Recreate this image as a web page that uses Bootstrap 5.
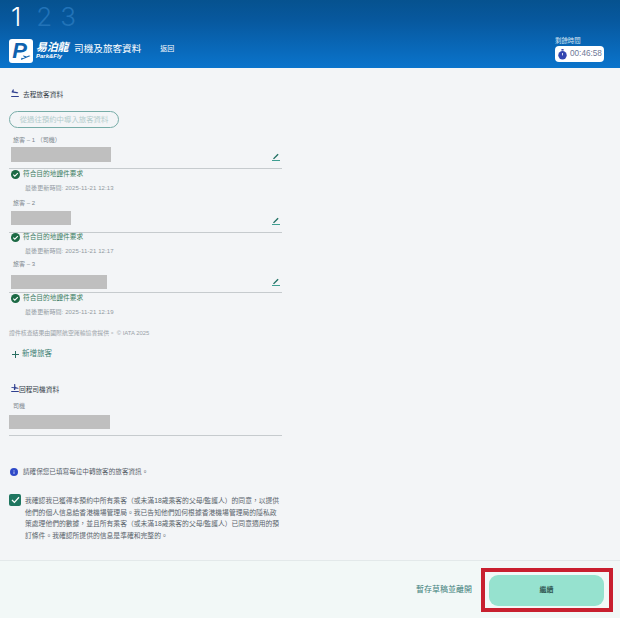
<!DOCTYPE html>
<html lang="zh-Hant">
<head>
<meta charset="utf-8">
<link href="https://cdn.jsdelivr.net/npm/bootstrap@5.3.0/dist/css/bootstrap.min.css" rel="stylesheet">
<style>
html,body{height:618px;overflow:hidden}
body{background:#f3f5f7;font-family:"Liberation Sans","Noto Sans CJK TC",sans-serif;color:#4a5560;position:relative}
.hdr{height:68px;background:linear-gradient(180deg,#06528f 0%,#07589e 30%,#0a74cc 100%);color:#fff;padding:0 16px 0 9px}
.steps{height:34px;font-family:Inter,sans-serif;font-weight:300;font-size:26px;line-height:33px;gap:8px;padding-left:2px}
.steps span{color:#2273b8}
.steps .on{color:#fff;margin-right:7px}
.logo-box{width:24px;height:24px;background:#fff;border-radius:3px;position:relative}
.logo-p{font:italic 700 22px/23px "Liberation Sans",sans-serif;color:#0f62ae;display:block;text-align:center;margin-left:-3px}
.logo-plane{position:absolute;right:2px;bottom:2px}
.logo-txt{margin-left:3px;font-style:italic;font-weight:700;line-height:1}
.logo-cn{font-size:11px;letter-spacing:-.3px;display:block;line-height:11px}
.logo-en{font:italic 700 6px/7px "Liberation Sans",sans-serif;display:block}
.ttl{font-size:9.6px;margin-left:6px;margin-top:-4px}
.back{font-size:7px;margin-left:19px;margin-top:-3px}
.tm-l{font-size:6.4px;line-height:9px;color:#dbe8f5;margin-left:0;margin-top:-1px}
.tm-b{width:49px;height:16px;background:#fff;border-radius:4px;font:8.2px/16px "Liberation Sans",sans-serif;color:#6d7897;gap:3px;padding-left:3px;margin-top:1px}
.main{padding:21px 0 0 9px;width:282px;height:492px}
.sec{font-size:6.7px;color:#333d47;line-height:12px;height:12px}
.imp{width:110px;height:17px;border:1px solid #77aca7;border-radius:9px;font-size:7.4px;line-height:15px;color:#b4cdcd;margin:10px 0 0;text-align:center;background:transparent;padding:0}
.lbl{font-size:6px;line-height:9px;color:#7b858d;padding-left:4px}
.fld{border-bottom:1px solid #c6cbce;padding-left:2px}
.blk{background:#bfbfbf;height:14px}
.edit{margin-right:2px}
.ok{font-size:6.7px;line-height:10px;color:#3c7d62;padding-left:2px;gap:3px}
.upd{font-size:6px;line-height:9px;color:#929aa1;padding-left:16px;margin-top:5px;letter-spacing:.1px}
.cond{font-size:5.9px;line-height:8px;color:#9aa2a8;margin-top:12px}
.add{font-size:7.5px;line-height:12px;color:#3b8073;margin-top:11px;padding-left:3px;gap:3px}
.tip{font-size:6.6px;line-height:10px;color:#57616a;gap:5px;padding-left:1px}
.agree{font-size:6.8px;line-height:11.7px;color:#59636b;width:257px}
.cbx{width:12px;height:12px;background:#1f7660;border-radius:2px;flex:none;margin-right:4px;margin-top:-1px}
.foot{height:58px;background:#f2f8f7;border-top:1px solid #e3e9ea;padding-right:16px}
.save{font-size:8px;color:#3f7f7b;margin-right:17px}
.go{width:115px;height:31px;background:#96e2cf;border:0;border-radius:9px;font-size:7px;font-weight:500;color:#21433e;padding:0;margin-top:1px}
.mark-red{position:absolute;left:481px;top:568px;width:132px;height:44px;border:4px solid #c8202f;pointer-events:none}
</style>
</head>
<body>
<header class="hdr">
  <div class="steps d-flex"><span class="on">1</span><span>2</span><span>3</span></div>
  <div class="d-flex align-items-start justify-content-between" style="padding-top:5px">
    <div class="d-flex align-items-center">
      <div class="logo-box"><b class="logo-p">P</b>
        <svg class="logo-plane" width="10" height="6" viewBox="0 0 10 6"><path d="M0 5 L9.5 1 L8 .5 L5.6 1.5 L2.5 .6 L1.8 1 L4 2.3 L2 3.2 L.9 2.8 L.4 3.1 Z" fill="#0f62ae"/></svg>
      </div>
      <div class="logo-txt"><span class="logo-cn">易泊龍</span><span class="logo-en">Park&amp;Fly</span></div>
      <div class="ttl">司機及旅客資料</div>
      <div class="back">返回</div>
    </div>
    <div style="margin-top:-2px">
      <div class="tm-l">剩餘時間</div>
      <div class="tm-b d-flex align-items-center">
        <svg width="9" height="11" viewBox="0 0 9 11"><rect x="3.4" y="0" width="2.2" height="1.6" fill="#3949ab"/><circle cx="4.5" cy="6.3" r="4.2" fill="#3346b0"/><path d="M4.5 4v2.4" stroke="#fff" stroke-width=".8"/></svg>
        <span>00:46:58</span>
      </div>
    </div>
  </div>
</header>
<main class="main">
  <div class="sec d-flex align-items-center gap-1" style="padding-left:2px">
    <svg width="8" height="8" viewBox="0 0 8 8" style="margin-top:-4px"><path d="M.2 7h7.6v1H.2zM.5 3 2 .2l.8.2-.2 2 3.4.7c.9.2 1.4.7 1.2 1-.2.3-.9.3-1.5.2L.8 3.4z" fill="#2f3f8f"/></svg>
    <span>去程旅客資料</span>
  </div>
  <button class="imp d-block" type="button">從過往預約中導入旅客資料</button>

  <div class="lbl" style="margin-top:8px">旅客 – 1 （司機）</div>
  <div class="fld d-flex justify-content-between align-items-end" style="padding-top:2px;height:24px;padding-bottom:7px">
    <div class="blk" style="width:100px;height:15px;align-self:flex-start"></div>
    <svg class="edit" width="8" height="8" viewBox="0 0 8 8"><path d="M0 7h8v1H0z" fill="#3f9f92"/><path d="M1 5.5 5.6 .8l1 1L2 6.2z" fill="#1f6f62"/></svg>
  </div>
  <div class="ok d-flex align-items-center"><svg width="9" height="9" viewBox="0 0 9 9"><circle cx="4.5" cy="4.5" r="4.5" fill="#1c6a45"/><path d="M2.3 4.6l1.5 1.5 3-3" fill="none" stroke="#fff" stroke-width="1.1"/></svg><span>符合目的地證件要求</span></div>
  <div class="upd">最後更新時間: 2025-11-21 12:13</div>

  <div class="lbl" style="margin-top:6px">旅客 – 2</div>
  <div class="fld d-flex justify-content-between align-items-end" style="padding-top:3px;height:25px;padding-bottom:7px">
    <div class="blk" style="width:60px;align-self:flex-start"></div>
    <svg class="edit" width="8" height="8" viewBox="0 0 8 8"><path d="M0 7h8v1H0z" fill="#3f9f92"/><path d="M1 5.5 5.6 .8l1 1L2 6.2z" fill="#1f6f62"/></svg>
  </div>
  <div class="ok d-flex align-items-center" style="margin-top:-1px"><svg width="9" height="9" viewBox="0 0 9 9"><circle cx="4.5" cy="4.5" r="4.5" fill="#1c6a45"/><path d="M2.3 4.6l1.5 1.5 3-3" fill="none" stroke="#fff" stroke-width="1.1"/></svg><span>符合目的地證件要求</span></div>
  <div class="upd">最後更新時間: 2025-11-21 12:17</div>

  <div class="lbl" style="margin-top:4px">旅客 – 3</div>
  <div class="fld d-flex justify-content-between align-items-end" style="padding-top:6px;height:24px;padding-bottom:6px">
    <div class="blk" style="width:96px;align-self:flex-start"></div>
    <svg class="edit" width="8" height="8" viewBox="0 0 8 8"><path d="M0 7h8v1H0z" fill="#3f9f92"/><path d="M1 5.5 5.6 .8l1 1L2 6.2z" fill="#1f6f62"/></svg>
  </div>
  <div class="ok d-flex align-items-center"><svg width="9" height="9" viewBox="0 0 9 9"><circle cx="4.5" cy="4.5" r="4.5" fill="#1c6a45"/><path d="M2.3 4.6l1.5 1.5 3-3" fill="none" stroke="#fff" stroke-width="1.1"/></svg><span>符合目的地證件要求</span></div>
  <div class="upd">最後更新時間: 2025-11-21 12:19</div>

  <div class="cond">證件核查結果由國際航空運輸協會提供。 © IATA 2025</div>
  <div class="add d-flex align-items-center"><svg width="7" height="7" viewBox="0 0 7 7"><path d="M3 0h1v3h3v1H4v3H3V4H0V3h3z" fill="#2a6f62"/></svg><span>新增旅客</span></div>

  <div class="sec d-flex align-items-center" style="margin-top:24px;padding-left:2px">
    <svg width="8" height="8" viewBox="0 0 8 8" style="margin-top:-5px"><path d="M.2 7h7.6v1H.2zM3.2 0h1l.2 3 3 .9v.9L4.4 4.4 4.2 6h-1.3l.1-1.7-2.6-.6V3l2.7.2z" fill="#2f3f8f"/></svg>
    <span>回程司機資料</span>
  </div>
  <div class="lbl" style="margin-top:6px;padding-left:4px">司機</div>
  <div class="fld" style="padding:4px 0 6px"><div class="blk" style="width:101px"></div></div>

  <div class="tip d-flex align-items-center" style="margin-top:31px">
    <svg width="8" height="8" viewBox="0 0 8 8"><circle cx="4" cy="4" r="4" fill="#2e49c8"/><path d="M4 3.4V6M4 2v.7" stroke="#dfe4fb" stroke-width=".8"/></svg>
    <span>請確保您已填寫每位中轉旅客的旅客資訊。</span>
  </div>
  <div class="d-flex" style="margin-top:18px">
    <div class="cbx d-flex align-items-center justify-content-center"><svg width="9" height="8" viewBox="0 0 9 8"><path d="M1 4l2.4 2.4L8 1.2" fill="none" stroke="#fff" stroke-width="1.3"/></svg></div>
    <div class="agree">我確認我已獲得本預約中所有乘客（或未滿18歲乘客的父母/監護人）的同意，以提供他們的個人信息給香港機場管理局。我已告知他們如何根據香港機場管理局的隱私政策處理他們的數據，並且所有乘客（或未滿18歲乘客的父母/監護人）已同意適用的預訂條件。我確認所提供的信息是準確和完整的。</div>
  </div>
</main>
<footer class="foot d-flex align-items-center justify-content-end">
  <span class="save">暫存草稿並離開</span>
  <button class="go" type="button">繼續</button>
</footer>
<div class="mark-red"></div>
<script src="https://cdn.jsdelivr.net/npm/bootstrap@5.3.0/dist/js/bootstrap.bundle.min.js"></script>
</body>
</html>
